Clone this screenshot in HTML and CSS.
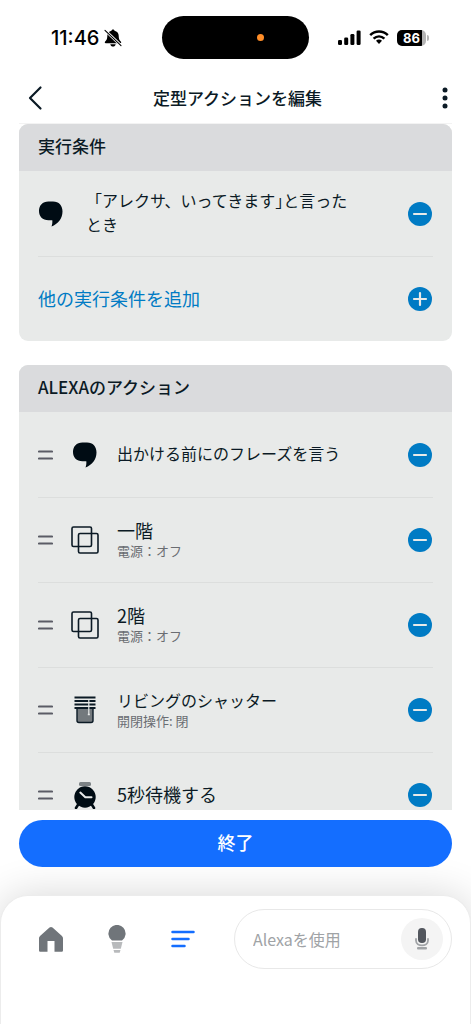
FILE: index.html
```html
<!DOCTYPE html>
<html lang="ja">
<head>
<meta charset="utf-8">
<meta name="viewport" content="width=device-width, initial-scale=1">
<title>定型アクションを編集</title>
<link rel="stylesheet" href="styles.css">
</head>
<body>
<svg class="defs" aria-hidden="true">
  <symbol id="bubble" viewBox="0 0 26 26"><path d="M10.500 0.500h4.500C21 .500 24.500 4.500 24.500 10.500c0 7-4.500 12.500-11 15 .8-2 1-4 .8-6.200H10.500C4.500 19.300 1 15.500 1 10S4.500.500 10.500.500z" fill="#000c14"/></symbol>
  <symbol id="group" viewBox="0 0 28 28"><g fill="none" stroke="#0b1a25" stroke-width="1.600"><rect x="1" y="1" width="19.500" height="19.500" rx="1.500"/><rect x="7.500" y="7.500" width="19.500" height="19.500" rx="1.500"/></g></symbol>
  <symbol id="minus" viewBox="0 0 26 26"><circle cx="13" cy="13" r="12" fill="#007bc4"/><path d="M7 13h12" stroke="#e8eae9" stroke-width="2.200" stroke-linecap="round"/></symbol>
  <symbol id="plus" viewBox="0 0 26 26"><circle cx="13" cy="13" r="12" fill="#007bc4"/><path d="M7 13h12M13 7v12" stroke="#e8eae9" stroke-width="2.200" stroke-linecap="round"/></symbol>
  <symbol id="grip" viewBox="0 0 15 12"><path d="M1 2.500h13M1 9.500h13" stroke="#5b5c66" stroke-width="2.200" stroke-linecap="round"/></symbol>
</svg>

<div class="status">
  <div class="status-side">
    <span class="clock">11:46</span>
    <svg width="18" height="18" viewBox="0 0 18 18"><path d="M9 .5c.9 0 1.500.6 1.500 1.300 2.700.7 4.200 2.500 4.200 5 0 3.700 1.200 4.700 2.300 6 .5.700.1 1.500-.7 1.500H1.700c-.8 0-1.200-.8-.7-1.500 1.100-1.300 2.300-2.300 2.300-6 0-2.500 1.500-4.300 4.200-5C7.500 1.100 8.100.5 9 .5zM6.300 15.200h5.400c-.3 1.400-1.400 2.300-2.700 2.300s-2.400-.9-2.700-2.300z"/><path d="M1 1.200L17 16.500" stroke="#fff" stroke-width="2.600"/><path d="M1 1.300L17 16.700" stroke="#000" stroke-width="1.100" stroke-linecap="round"/></svg>
  </div>
  <div class="island"><span class="mic-dot"></span></div>
  <div class="status-side status-right">
    <svg width="23" height="16" viewBox="0 0 23 16"><rect x="0" y="10" width="4" height="5" rx="1.300"/><rect x="6.200" y="7.500" width="4" height="7.500" rx="1.300"/><rect x="12.400" y="4" width="4" height="11" rx="1.300"/><rect x="18.600" y="0.500" width="4" height="14.500" rx="1.300"/></svg>
    <svg width="20" height="15" viewBox="0 0 20 15"><g fill="none" stroke="#000" stroke-width="2.500"><path d="M1.200 5.200C6.200.300 13.800.300 18.800 5.200"/><path d="M4.600 8.700c3.200-3 7.600-3 10.800 0"/></g><path d="M10 9.600c1.200 0 2.200.4 3 1.100L10 14l-3-3.300c.8-.7 1.800-1.100 3-1.100z"/></svg>
    <span class="battery">86</span>
  </div>
</div>

<header class="topbar">
  <button class="icon-button back" aria-label="戻る"><svg width="16" height="26" viewBox="0 0 16 26"><path d="M13.500 2.500L3 13l10.500 10.500" fill="none" stroke="#0b1a25" stroke-width="2.200" stroke-linecap="round" stroke-linejoin="round"/></svg></button>
  <h1>定型アクションを編集</h1>
  <button class="icon-button more" aria-label="メニュー"><svg width="6" height="24" viewBox="0 0 6 24"><g fill="#0b1a25"><circle cx="3" cy="4" r="2.500"/><circle cx="3" cy="12" r="2.500"/><circle cx="3" cy="20" r="2.500"/></g></svg></button>
</header>

<main class="content">
  <section class="card">
    <h2>実行条件</h2>
    <div class="row trigger">
      <svg class="glyph" width="26" height="26"><use href="#bubble"/></svg>
      <p class="phrase">「アレクサ、いってきます<span class="half">」</span>と言ったとき</p>
      <button class="icon-button" aria-label="削除"><svg width="26" height="26"><use href="#minus"/></svg></button>
    </div>
    <div class="row">
      <a class="add" href="#add">他の実行条件を追加</a>
      <button class="icon-button" aria-label="追加"><svg width="26" height="26"><use href="#plus"/></svg></button>
    </div>
  </section>

  <section class="card">
    <h2>ALEXAのアクション</h2>
    <div class="row">
      <svg class="grip" width="15" height="12"><use href="#grip"/></svg>
      <svg class="glyph" width="28" height="26"><use href="#bubble"/></svg>
      <div class="label"><p class="phrase">出かける前にのフレーズを言う</p></div>
      <button class="icon-button" aria-label="削除"><svg width="26" height="26"><use href="#minus"/></svg></button>
    </div>
    <div class="row">
      <svg class="grip" width="15" height="12"><use href="#grip"/></svg>
      <svg class="glyph" width="28" height="28"><use href="#group"/></svg>
      <div class="label"><p class="name">一階</p><p class="state">電源：オフ</p></div>
      <button class="icon-button" aria-label="削除"><svg width="26" height="26"><use href="#minus"/></svg></button>
    </div>
    <div class="row">
      <svg class="grip" width="15" height="12"><use href="#grip"/></svg>
      <svg class="glyph" width="28" height="28"><use href="#group"/></svg>
      <div class="label"><p class="name">2階</p><p class="state">電源：オフ</p></div>
      <button class="icon-button" aria-label="削除"><svg width="26" height="26"><use href="#minus"/></svg></button>
    </div>
    <div class="row">
      <svg class="grip" width="15" height="12"><use href="#grip"/></svg>
      <svg class="glyph" width="28" height="28" viewBox="0 0 28 28"><path d="M6 12h16v12.500a2 2 0 0 1-2 2H8a2 2 0 0 1-2-2z" fill="#73797d" stroke="#0b1a25" stroke-width="1.400"/><path d="M3.500 1.500h21M3.500 5h21M3.500 8.500h21M3.500 12h21" stroke="#0b1a25" stroke-width="1.800"/><path d="M17.800 3.500v15" stroke="#e8eae9" stroke-width="1.200"/><path d="M16.800 18.500h2" stroke="#e8eae9" stroke-width="1.500"/></svg>
      <div class="label"><p class="phrase">リビングのシャッター</p><p class="state">開閉操作: 閉</p></div>
      <button class="icon-button" aria-label="削除"><svg width="26" height="26"><use href="#minus"/></svg></button>
    </div>
    <div class="row">
      <svg class="grip" width="15" height="12"><use href="#grip"/></svg>
      <svg class="glyph" width="28" height="28" viewBox="0 0 28 28"><rect x="8" y="1" width="12" height="4" rx="1.500" fill="#7c8285"/><circle cx="14" cy="16" r="10.700" fill="#000c14"/><path d="M7.500 23L5 27M20.500 23l2.500 4" stroke="#000c14" stroke-width="2.600" stroke-linecap="round"/><path d="M9.300 11.600l5 4.700h6.200" fill="none" stroke="#e8eae9" stroke-width="2" stroke-linecap="round" stroke-linejoin="round"/></svg>
      <div class="label"><p class="name">5秒待機する</p></div>
      <button class="icon-button" aria-label="削除"><svg width="26" height="26"><use href="#minus"/></svg></button>
    </div>
  </section>
</main>

<div class="actions"><button class="done">終了</button></div>

<nav class="tabs">
  <a href="#home" aria-label="ホーム"><svg width="28" height="28" viewBox="0 0 28 28"><path d="M12.500 2.600a2.200 2.200 0 0 1 3 0l9.200 8.200c.9.900 1.300 1.600 1.300 2.700v11.700c0 1-.6 1.600-1.600 1.600h-6.900V16h-7v10.800H3.600c-1 0-1.600-.6-1.600-1.600V13.500c0-1.100.4-1.800 1.300-2.700z" fill="#70757a"/></svg></a>
  <a href="#devices" aria-label="デバイス"><svg width="28" height="28" viewBox="0 0 28 28"><path d="M9 15.500a8.600 8.600 0 1 1 10 0z" fill="#70757a"/><path d="M8.500 17h11l-1.700 6.700h-7.600z" fill="#b8babc"/><path d="M10.500 25h7l-.8 2.700h-5.400z" fill="#b8babc"/></svg></a>
  <a href="#more" aria-label="その他"><svg width="28" height="28" viewBox="0 0 28 28"><path d="M3.500 7h21M3.500 14h16M3.500 21h12" stroke="#146eff" stroke-width="2.500" stroke-linecap="round"/></svg></a>
  <div class="ask">
    <input type="text" aria-label="Alexaを使用" placeholder="Alexaを使用">
    <button class="mic" aria-label="音声入力"><svg width="20" height="26" viewBox="0 0 20 26"><path d="M4 13v1.500c0 6.500 12 6.500 12 0V13" fill="none" stroke="#a0a3a6" stroke-width="1.800" stroke-linecap="round"/><rect x="6" y="2" width="8" height="15" rx="3.800" fill="#53575e"/><rect x="5" y="21" width="10" height="2.500" rx="1" fill="#a0a3a6"/></svg></button>
  </div>
</nav>
</body>
</html>
```
FILE: styles.css
```css
* {
  box-sizing: border-box;
}

body {
  margin: 0;
  height: 100vh;
  display: flex;
  flex-direction: column;
  overflow: hidden;
  background: #fff;
  color: #0b1a25;
  font-family: "Noto Sans CJK JP", sans-serif;
  font-size: 16px;
}

h1, h2, p {
  margin: 0;
}

svg {
  display: block;
  flex: none;
}

.defs {
  width: 0;
  height: 0;
  position: absolute;
}

.status {
  display: grid;
  grid-template-columns: 1fr 147px 1fr;
  align-items: center;
  padding: 16px 0 14px;
  color: #000;
}

.status-side {
  display: flex;
  align-items: center;
  gap: 5px;
  padding-left: 51px;
}

.status-right {
  justify-content: flex-end;
  gap: 8px;
  padding: 0 45px 0 0;
}

.clock {
  font: 500 20px/24px Inter, sans-serif;
}

.island {
  height: 43px;
  border-radius: 22px;
  background: #000;
  display: flex;
  align-items: center;
  justify-content: flex-end;
  padding-right: 45px;
}

.mic-dot {
  width: 7px;
  height: 7px;
  border-radius: 50%;
  background: #ff8d28;
}

.battery {
  position: relative;
  width: 29px;
  height: 16px;
  border-radius: 5px;
  background: linear-gradient(to right, #000 86%, #b5b5b5 86%);
  color: #fff;
  font: 700 13px/16px Inter, sans-serif;
  text-align: center;
}

.battery::after {
  content: "";
  position: absolute;
  right: -3px;
  top: 5px;
  width: 2px;
  height: 6px;
  border-radius: 0 2px 2px 0;
  background: #b5b5b5;
}

.topbar {
  display: grid;
  grid-template-columns: 24px 1fr 24px;
  align-items: center;
  height: 51px;
  margin: 0 19px;
  padding: 0 4px 0 8px;
  border-bottom: 1px solid #f3f3f3;
}

.topbar h1 {
  padding-bottom: 1px;
  font-size: 17px;
  line-height: 24px;
  font-weight: 500;
  text-align: center;
}

.icon-button {
  display: flex;
  flex: none;
  padding: 0;
  border: 0;
  background: none;
  cursor: pointer;
}

.more {
  justify-content: flex-end;
}

.content {
  flex: 1;
  min-height: 0;
  overflow: hidden;
  display: flex;
  flex-direction: column;
  gap: 24px;
  padding: 0 19px;
}

.card {
  flex: none;
  border-radius: 9px;
  overflow: hidden;
  background: #e8eae9;
}

.card h2 {
  padding: 10px 19px 13px;
  background: #dadbdd;
  font-size: 17px;
  line-height: 24px;
  font-weight: 500;
}

.row {
  display: flex;
  align-items: center;
  justify-content: space-between;
  gap: 18px;
  height: 85px;
  margin: 0 19px;
}

.row + .row {
  border-top: 1px solid #dcdedd;
}

.trigger {
  gap: 22px;
}

.trigger .phrase {
  flex: 1;
  padding: 0 30px 3px 0;
}

.label {
  flex: 1;
  padding-bottom: 3px;
}

.phrase {
  font-size: 16px;
  line-height: 24px;
}

.half {
  font-feature-settings: "halt";
}

.name {
  font-size: 18px;
  line-height: 24px;
}

.state {
  color: #6a6d72;
  font-size: 13px;
  line-height: 18px;
}

.add {
  padding-bottom: 3px;
  color: #007bc4;
  font-size: 18px;
  line-height: 24px;
  text-decoration: none;
}

.actions {
  position: relative;
  z-index: 1;
  padding: 10px 19px 28px;
}

.done {
  display: block;
  width: 100%;
  height: 47px;
  padding: 0 0 3px;
  border: 0;
  border-radius: 24px;
  background: #146eff;
  color: #fff;
  font: 500 18px/24px "Noto Sans CJK JP", sans-serif;
}

.tabs {
  display: flex;
  align-items: flex-start;
  height: 129px;
  padding: 13px 18px 13px 17px;
  border: 1px solid #ececec;
  border-bottom: 0;
  border-radius: 28px 28px 0 0;
  background: #fff;
  box-shadow: 0 0 40px rgba(0, 0, 0, 0.16);
}

.tabs a {
  display: flex;
  align-items: center;
  justify-content: center;
  width: 66px;
  height: 60px;
}

.ask {
  flex: 1;
  min-width: 0;
  display: flex;
  align-items: center;
  height: 60px;
  margin-left: 18px;
  padding: 0 8px 0 18px;
  border: 1px solid #e8e8e8;
  border-radius: 30px;
}

.ask input {
  flex: 1;
  min-width: 0;
  padding: 0;
  border: 0;
  outline: 0;
  background: none;
  font: 400 16px/24px "Noto Sans CJK JP", sans-serif;
}

.ask input::placeholder {
  color: #a0a3a6;
  opacity: 1;
}

.mic {
  display: flex;
  align-items: center;
  justify-content: center;
  width: 42px;
  height: 42px;
  padding: 0;
  border: 0;
  border-radius: 50%;
  background: #f4f4f4;
}
```
